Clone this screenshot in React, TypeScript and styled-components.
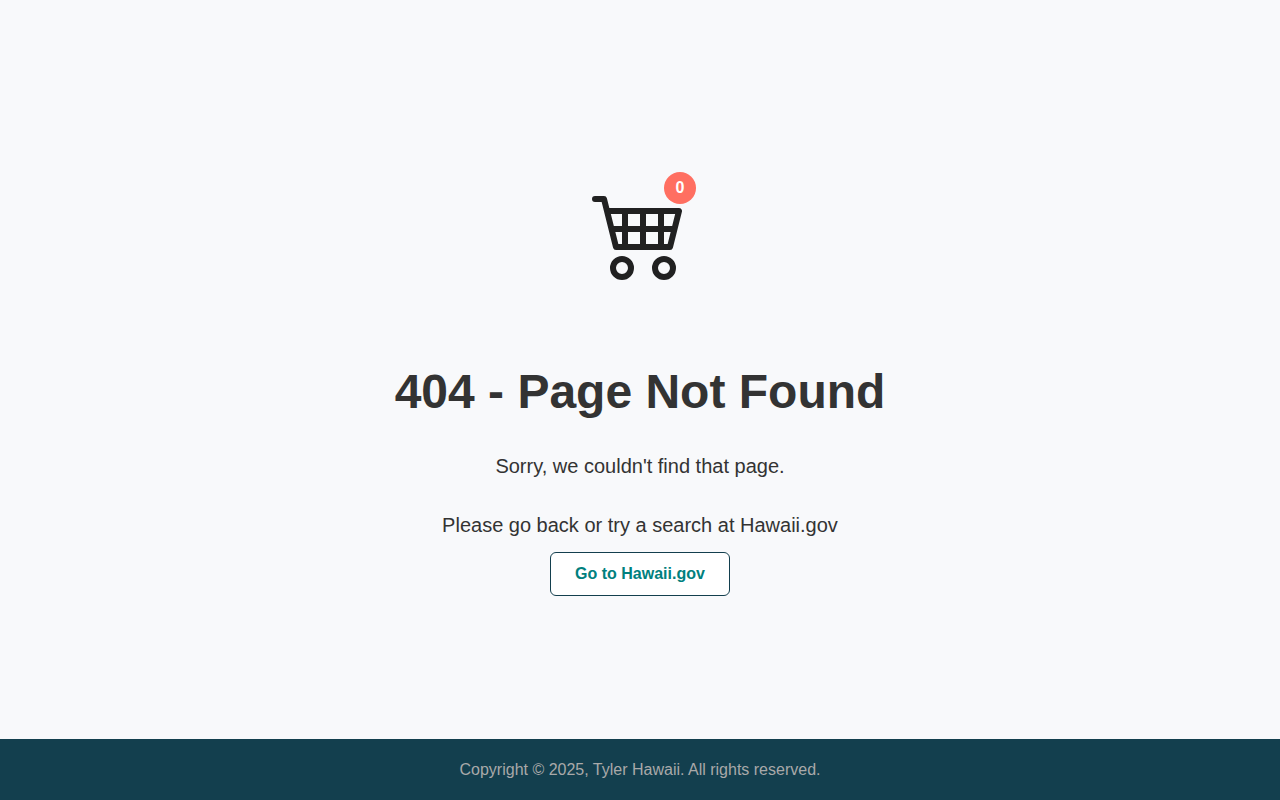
import React from "react";
import styled, { createGlobalStyle } from "styled-components";
import { BsCart4 } from "react-icons/bs";

const GlobalStyle = createGlobalStyle`
  *, *::before, *::after { box-sizing: border-box; }
  body {
    margin: 0;
    background: #f8f9fb;
    color: #333;
    font-family: "Liberation Sans", Arial, sans-serif;
    font-size: 16px;
    line-height: 24px;
  }
`;

const Page = styled.div`
  display: flex;
  flex-direction: column;
  min-height: 100vh;
`;

const Main = styled.main`
  flex: 1;
  display: flex;
  flex-direction: column;
  align-items: center;
  justify-content: center;
  text-align: center;
`;

const Cart = styled.div`
  position: relative;
  display: flex;
  margin: 40px 0 80px;
  color: #212121;
`;

const Badge = styled.span`
  position: absolute;
  top: -12px;
  right: -8px;
  display: flex;
  align-items: center;
  justify-content: center;
  width: 32px;
  height: 32px;
  border-radius: 50%;
  background: #ff6f61;
  color: #fff;
  font-weight: 700;
`;

const Title = styled.h1`
  margin: 0 0 27px;
  font-size: 48px;
  line-height: 64px;
`;

const Message = styled.p<{ $gap: number }>`
  margin: 0 0 ${({ $gap }) => $gap}px;
  font-size: 20px;
  line-height: 30px;
`;

const ButtonLink = styled.a`
  padding: 9px 24px;
  border: 1px solid #133f4e;
  border-radius: 6px;
  background: #fff;
  color: #00807e;
  font-weight: 700;
  text-decoration: none;
`;

const Footer = styled.footer`
  padding: 19px 16px 18px;
  background: #133f4e;
  color: #a9a9a9;
  text-align: center;
`;

export default function App() {
  return (
    <Page>
      <GlobalStyle />
      <Main>
        <Cart>
          <BsCart4 size={96} aria-hidden="true" />
          <Badge>0</Badge>
        </Cart>
        <Title>404 - Page Not Found</Title>
        <Message $gap={29}>Sorry, we couldn't find that page.</Message>
        <Message $gap={12}>Please go back or try a search at Hawaii.gov</Message>
        <ButtonLink href="https://hawaii.gov">Go to Hawaii.gov</ButtonLink>
      </Main>
      <Footer>Copyright © 2025, Tyler Hawaii. All rights reserved.</Footer>
    </Page>
  );
}
